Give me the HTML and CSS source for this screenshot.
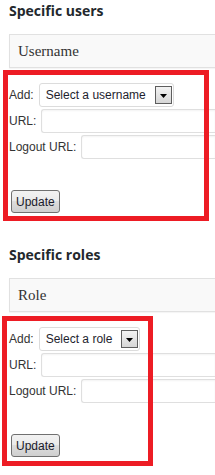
FILE: index.html
```html
<!DOCTYPE html>
<html lang="en">
<head>
  <meta charset="UTF-8">
  <meta name="viewport" content="width=device-width, initial-scale=1.0">
  <title>Login redirect rules</title>
  <link rel="stylesheet" href="styles.css">
</head>
<body>
  <div class="page">

    <!-- Users -->
    <section class="group">
      <h3 class="group-title">Specific users</h3>
      <div class="list-head">Username</div>
      <form class="rule-form rule-form--users">
        <div class="field">
          <label class="field-label">Add:</label>
          <div class="picker">
            <span class="picker-text">Select a username</span>
            <span class="picker-arrow"><svg width="7" height="4" viewBox="0 0 7 4"><path d="M0 0h7L3.5 4z" fill="#000"/></svg></span>
          </div>
        </div>
        <div class="field">
          <label class="field-label">URL:</label>
          <input class="text-input" type="text">
        </div>
        <div class="field">
          <label class="field-label">Logout URL:</label>
          <input class="text-input" type="text">
        </div>
        <button class="update-btn" type="button">Update</button>
      </form>
    </section>

    <!-- Roles -->
    <section class="group">
      <h3 class="group-title">Specific roles</h3>
      <div class="list-head">Role</div>
      <form class="rule-form rule-form--roles">
        <div class="field">
          <label class="field-label">Add:</label>
          <div class="picker">
            <span class="picker-text">Select a role</span>
            <span class="picker-arrow"><svg width="7" height="4" viewBox="0 0 7 4"><path d="M0 0h7L3.5 4z" fill="#000"/></svg></span>
          </div>
        </div>
        <div class="field">
          <label class="field-label">URL:</label>
          <input class="text-input" type="text">
        </div>
        <div class="field">
          <label class="field-label">Logout URL:</label>
          <input class="text-input" type="text">
        </div>
        <button class="update-btn" type="button">Update</button>
      </form>
    </section>

  </div>
</body>
</html>
```

FILE: styles.css
```css
html, body {
  margin: 0;
  overflow: hidden;
  background: #fff;
}
.page {
  box-sizing: border-box;
  width: 100%;
  padding-left: 9px;
  font-family: "Liberation Sans", Arial, sans-serif;
  font-size: 12px;
  color: #333;
}
.group {
  margin-bottom: 31px;
}
.group-title {
  margin: 0 0 13px;
  font-family: "Open Sans", sans-serif;
  font-weight: 700;
  font-size: 14px;
  line-height: 21px;
  color: #23282d;
}
.list-head {
  height: 32px;
  line-height: 32px;
  padding-left: 8px;
  border: 1px solid #e1e1e1;
  border-right: 0;
  background: #f9f9f9;
  box-shadow: 0 1px 1px rgba(0, 0, 0, 0.04);
  font-family: "Liberation Serif", serif;
  font-size: 15px;
  color: #333;
}
.rule-form {
  position: relative;
  padding-top: 15px;
}
/* red highlight drawn over the form */
.rule-form::after {
  content: "";
  position: absolute;
  box-sizing: border-box;
  border: 5px solid #ed1c24;
  pointer-events: none;
}
.rule-form--users::after {
  top: 2px;
  left: -6px;
  width: 206px;
  height: 151px;
}
.rule-form--roles::after {
  top: 4px;
  left: -7px;
  width: 151px;
  height: 150px;
}
.field {
  display: flex;
  align-items: center;
  gap: 5px;
  height: 24px;
  margin-bottom: 2px;
}
.field-label {
  white-space: nowrap;
}
.picker {
  display: flex;
  align-items: center;
  gap: 9px;
  height: 22px;
  padding: 0 1px 0 6px;
  border: 1px solid #dcdcdc;
  border-radius: 3px;
  background: #fff;
  color: #1e1e2e;
}
.picker-arrow {
  display: flex;
  align-items: center;
  justify-content: center;
  width: 15px;
  height: 15px;
  padding-top: 1px;
  box-sizing: content-box;
  border: 1px solid #5e5e5e;
  background: linear-gradient(#f3f3f3, #d6d6d6);
}
.text-input {
  flex: 1;
  min-width: 0;
  box-sizing: border-box;
  height: 24px;
  margin: 0;
  border: 1px solid #dfdfdf;
  border-right: 0;
  border-radius: 3px 0 0 3px;
  box-shadow: inset 0 1px 2px rgba(0, 0, 0, 0.05);
  background: #fff;
}
.update-btn {
  display: block;
  height: 23px;
  margin: 31px 0 0 2px;
  padding: 0 4px;
  border: 1px solid #707070;
  border-radius: 3px;
  background: linear-gradient(#f2f2f2 0%, #ebebeb 45%, #dddddd 50%, #cfcfcf 100%);
  font-family: "Liberation Sans", Arial, sans-serif;
  font-size: 12px;
  color: #1a1a2a;
}
```
